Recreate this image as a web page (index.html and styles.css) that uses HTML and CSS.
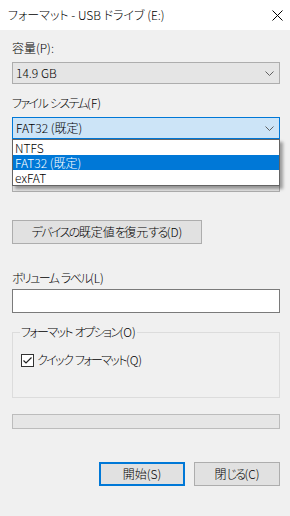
FILE: index.html
```html
<!DOCTYPE html>
<html lang="ja">
<head>
<meta charset="utf-8">
<link rel="stylesheet" href="styles.css">
</head>
<body>
<div class="window">
  <div class="titlebar">
    <span class="title">フォーマット - USB ドライブ (E:)</span>
    <svg class="close" width="11" height="11" viewBox="0 0 11 11"><path d="M0.5 0.5 L10.5 10.5 M10.5 0.5 L0.5 10.5" stroke="#000" stroke-width="1" fill="none"/></svg>
  </div>
  <div class="content">
    <div class="label">容量(P):</div>
    <div class="combo">
      <span>14.9 GB</span>
      <svg class="chev" width="9" height="5" viewBox="0 0 9 5"><polyline points="0.5,0.5 4.5,4.5 8.5,0.5" fill="none" stroke="#606060" stroke-width="1"/></svg>
    </div>

    <div class="label"><span class="k">ファイル</span> <span class="k">システム</span>(F)</div>
    <div class="combo-wrap">
      <div class="combo open">
        <span>FAT32 (既定)</span>
        <svg class="chev" width="9" height="5" viewBox="0 0 9 5"><polyline points="0.5,0.5 4.5,4.5 8.5,0.5" fill="none" stroke="#606060" stroke-width="1"/></svg>
      </div>
      <ul class="dropdown">
        <li>NTFS</li>
        <li class="sel">FAT32 (既定)</li>
        <li>exFAT</li>
      </ul>
    </div>

    <div class="label covered"><span class="k">アロケーション</span> <span class="k">ユニット</span> <span class="k">サイズ</span>(A)</div>
    <div class="combo alloc">
      <span>4096 <span class="k">バイト</span></span>
      <svg class="chev" width="9" height="5" viewBox="0 0 9 5"><polyline points="0.5,0.5 4.5,4.5 8.5,0.5" fill="none" stroke="#606060" stroke-width="1"/></svg>
    </div>

    <button class="btn restore"><span class="k">デバイスの</span>既定値<span class="k">を</span>復元<span class="k">する</span>(D)</button>

    <div class="label vol"><span class="k">ボリューム</span> <span class="k">ラベル</span>(L)</div>
    <div class="textbox"></div>

    <fieldset class="group">
      <legend><span class="k">フォーマット</span> <span class="k">オプション</span>(O)</legend>
      <div class="check">
        <span class="box"><svg width="11" height="11" viewBox="0 0 11 11"><polyline points="1.5,5.5 4,8 9.5,2.5" fill="none" stroke="#222" stroke-width="1.2"/></svg></span>
        <span><span class="k">クイック</span> <span class="k">フォーマット</span>(Q)</span>
      </div>
    </fieldset>

    <div class="progress"></div>

    <div class="actions">
      <button class="btn default">開始(S)</button>
      <button class="btn">閉<span class="k">じる</span>(C)</button>
    </div>
  </div>
</div>
</body>
</html>
```
FILE: styles.css
```css
* { box-sizing: border-box; }
html, body {
  margin: 0;
  padding: 0;
}
body {
  width: 290px;
  height: 516px;
  background: #f0f0f0;
  font-family: "Noto Sans CJK JP", "Noto Sans", sans-serif;
  font-size: 12px;
  font-weight: 300;
  color: #000;
  font-feature-settings: "palt";
  overflow: hidden;
}
.k { letter-spacing: -1.6px; }
.titlebar {
  height: 30px;
  background: #fff;
  display: flex;
  align-items: center;
  justify-content: space-between;
  padding: 0 7px 0 8px;
}
.title { line-height: 16px; }
.close { display: block; }
.content {
  padding: 0 10px 0 12px;
}
.label {
  height: 16px;
  line-height: 16px;
  margin-top: 10px;
  margin-bottom: 6px;
  white-space: nowrap;
}
.label.covered { visibility: hidden; }
.combo + .label { margin-top: 11px; }
.combo-wrap + .label { margin-top: 9px; }
.combo {
  height: 22px;
  border: 1px solid #adadad;
  background: #e5e5e5;
  display: flex;
  align-items: center;
  justify-content: space-between;
  padding: 0 5px 0 3px;
  line-height: 16px;
}
.combo.open {
  background: #cce4f7;
  border-color: #0078d7;
}
.chev { display: block; }
.combo-wrap { position: relative; }
.dropdown {
  position: absolute;
  left: 0;
  right: 0;
  top: 100%;
  margin: 0;
  padding: 0;
  list-style: none;
  background: #fff;
  border: 1px solid #646464;
  box-shadow: 3px 3px 3px rgba(0, 0, 0, 0.35);
  z-index: 2;
}
.dropdown li {
  height: 15px;
  line-height: 15px;
  padding-left: 2px;
}
.dropdown li.sel {
  background: #0078d7;
  color: #fff;
}
.btn {
  font-family: inherit;
  font-size: 12px;
  font-weight: 300;
  font-feature-settings: "palt";
  color: #000;
  background: #e1e1e1;
  border: 1px solid #adadad;
  height: 24px;
  padding: 0;
  margin: 0;
  line-height: 16px;
}
.restore {
  display: block;
  width: 190px;
  margin-top: 28px;
}
.label.vol {
  margin-top: 26px;
  margin-bottom: 3px;
}
.textbox {
  height: 24px;
  background: #fff;
  border: 1px solid #7a7a7a;
}
.group {
  margin: 11px 0 0 0;
  padding: 12px 8px 29px 8px;
  border: 1px solid #dcdcdc;
  min-width: 0;
}
.group legend {
  padding: 0 1px;
  margin-left: -1px;
  line-height: 16px;
  height: 16px;
}
.check {
  display: flex;
  align-items: center;
  height: 16px;
  gap: 3px;
  line-height: 16px;
}
.box {
  width: 13px;
  height: 13px;
  border: 1px solid #333;
  background: #fff;
  display: block;
}
.box svg { display: block; }
.progress {
  margin-top: 16px;
  height: 15px;
  border: 1px solid #bcbcbc;
  background: #e6e6e6;
}
.actions {
  display: flex;
  justify-content: flex-end;
  gap: 9px;
  margin-top: 33px;
}
.actions .btn { width: 86px; }
.btn.default { border: 2px solid #0078d7; }
```
